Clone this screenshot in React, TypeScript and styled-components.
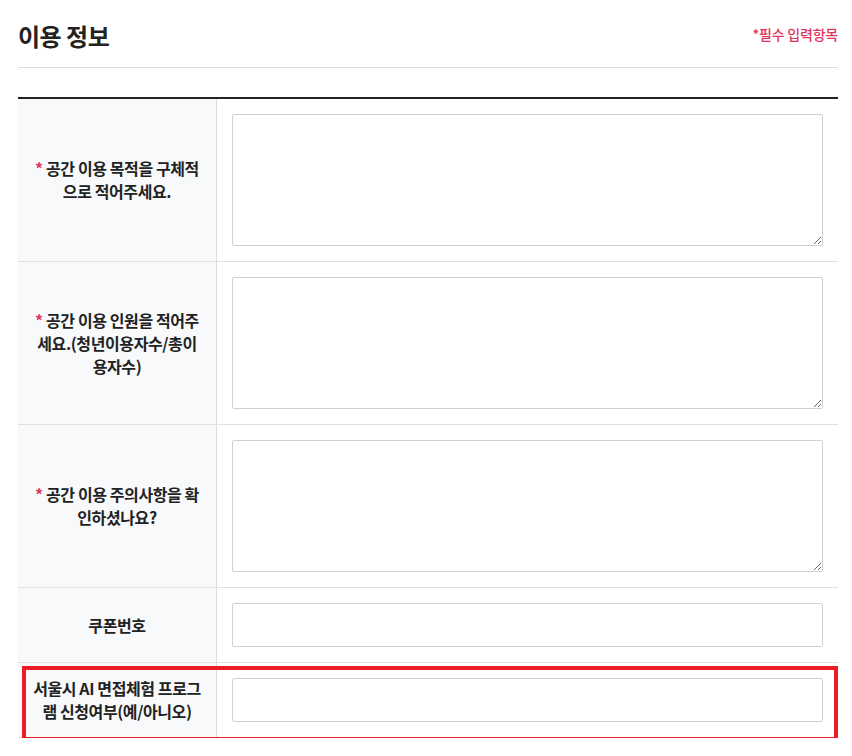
import styled, { createGlobalStyle } from 'styled-components';

const GlobalStyle = createGlobalStyle`
  body {
    margin: 0;
    background: #fff;
    font-family: 'Noto Sans CJK KR', 'Noto Sans', sans-serif;
    color: #222;
  }
`;

const Page = styled.div`
  padding: 0 14px 0 18px;
`;

const Header = styled.div`
  display: flex;
  justify-content: space-between;
  align-items: center;
  height: 68px;
  border-bottom: 1px solid #dcdcdc;
  box-sizing: border-box;
  padding-top: 4px;
`;

const Title = styled.h2`
  margin: 0;
  font-size: 24px;
  font-weight: 700;
  color: #222;
  letter-spacing: -0.5px;
`;

const Required = styled.span`
  font-size: 14px;
  font-weight: 500;
  color: #e2335b;
  letter-spacing: -0.2px;
  margin-top: -4px;
`;

const Table = styled.div`
  margin-top: 29px;
  border-top: 2px solid #222;
`;

const Row = styled.div`
  display: grid;
  grid-template-columns: 199px 1fr;
  border-bottom: 1px solid #e0e0e0;
`;

const Label = styled.div`
  background: #f8f9fb;
  border-right: 1px solid #dcdcdc;
  display: flex;
  align-items: center;
  justify-content: center;
  text-align: center;
  padding: 0 14px;
  font-size: 16px;
  font-weight: 700;
  line-height: 23px;
  color: #222;
  letter-spacing: -0.4px;
  word-break: break-all;
`;

const Star = styled.span`
  color: #e2335b;
`;

const Cell = styled.div`
  padding: 15px;
`;

const Area = styled.textarea`
  display: block;
  box-sizing: border-box;
  width: 100%;
  height: 132px;
  border: 1px solid #cfd2d5;
  border-radius: 2px;
  font: inherit;
`;

const Input = styled.input`
  display: block;
  box-sizing: border-box;
  width: 100%;
  height: 44px;
  border: 1px solid #cfd2d5;
  border-radius: 2px;
  font: inherit;
`;

const Highlight = styled.div`
  position: relative;

  &::after {
    content: '';
    position: absolute;
    left: 4px;
    right: 0;
    top: 3px;
    bottom: -3px;
    border: 4px solid #ed1c24;
    pointer-events: none;
  }
`;

const textRows = [
  '공간 이용 목적을 구체적으로 적어주세요.',
  '공간 이용 인원을 적어주세요.(청년이용자수/총이용자수)',
  '공간 이용 주의사항을 확인하셨나요?',
];

export default function App() {
  return (
    <Page>
      <GlobalStyle />
      <Header>
        <Title>이용 정보</Title>
        <Required>*필수 입력항목</Required>
      </Header>
      <Table>
        {textRows.map((label) => (
          <Row key={label}>
            <Label>
              <div>
                <Star>*</Star> {label}
              </div>
            </Label>
            <Cell>
              <Area />
            </Cell>
          </Row>
        ))}
        <Row>
          <Label>쿠폰번호</Label>
          <Cell>
            <Input />
          </Cell>
        </Row>
        <Highlight>
          <Row>
            <Label>서울시 AI 면접체험 프로그램 신청여부(예/아니오)</Label>
            <Cell>
              <Input />
            </Cell>
          </Row>
        </Highlight>
      </Table>
    </Page>
  );
}
